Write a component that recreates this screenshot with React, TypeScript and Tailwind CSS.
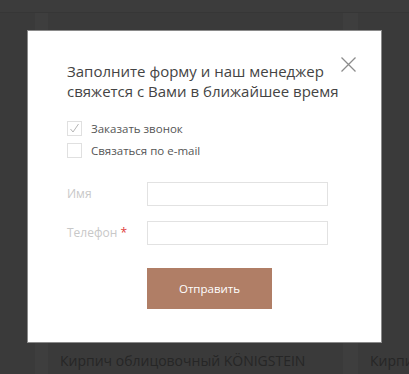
import React from "react";

const font = { fontFamily: '"Open Sans", "Noto Sans", sans-serif' };

const Check = ({ checked, label }: { checked?: boolean; label: string }) => (
  <label className="flex items-center h-[15px] gap-[9px]">
    <span className="w-[15px] h-[15px] border border-[#e0e0e0] flex items-center justify-center">
      {checked && (
        <svg width="11" height="11" viewBox="0 0 11 11" fill="none">
          <path d="M1.5 6 L4 9 L9.5 1" stroke="#b5b5b5" strokeWidth="1" />
        </svg>
      )}
    </span>
    <span className="text-[11.5px] text-[#555]">{label}</span>
  </label>
);

const Field = ({ label, required }: { label: string; required?: boolean }) => (
  <div className="flex items-center">
    <span className="w-[80px] text-[12px] text-[#c8c8c8]">
      {label}
      {required && <span className="text-[#e03b3b]"> *</span>}
    </span>
    <input className="w-[181px] h-[24px] border border-[#e2e2e2] bg-white outline-none" />
  </div>
);

export default function App() {
  return (
    <div className="relative w-[409px] h-[374px] bg-[#3a3a3a] overflow-hidden" style={font}>
      <div className="h-[13px] bg-[#3c3c3c] border-b border-[#363636]" />
      <div className="flex h-[361px]">
        <div className="w-[35px] shrink-0" />
        <div className="w-[13px] shrink-0 bg-[#3e3e3e]" />
        <div className="w-[295px] shrink-0 flex flex-col justify-end pl-[12px] pb-[3px]">
          <span className="text-[14px] text-[#262626] whitespace-nowrap">Кирпич облицовочный KÖNIGSTEIN</span>
        </div>
        <div className="w-[15px] shrink-0 bg-[#3e3e3e]" />
        <div className="flex-1 min-w-0 overflow-hidden flex flex-col justify-end pl-[12px] pb-[3px]">
          <span className="text-[14px] text-[#262626] whitespace-nowrap">Кирпич</span>
        </div>
      </div>

      <div className="absolute left-[27px] top-[30px] w-[355px] h-[313px] bg-white border border-[#8a8a8a] pl-[39px] pt-[30px]">
        <button className="absolute left-[312px] top-[25px] w-[17px] h-[17px]">
          <svg width="17" height="17" viewBox="0 0 17 17">
            <path d="M1.5 1.5 L15.5 15.5 M15.5 1.5 L1.5 15.5" stroke="#8c8c8c" strokeWidth="1.3" />
          </svg>
        </button>
        <h2 className="text-[15px] leading-[20px] text-[#444]">
          Заполните форму и наш менеджер
          <br />
          свяжется с Вами в ближайшее время
        </h2>
        <div className="mt-[20px] flex flex-col gap-[7px]">
          <Check checked label="Заказать звонок" />
          <Check label="Связаться по e-mail" />
        </div>
        <div className="mt-[24px] flex flex-col gap-[15px]">
          <Field label="Имя" />
          <Field label="Телефон" required />
        </div>
        <button className="mt-[23px] ml-[80px] w-[125px] h-[41px] bg-[#b07e66] text-white text-[11.5px]">
          Отправить
        </button>
      </div>
    </div>
  );
}
